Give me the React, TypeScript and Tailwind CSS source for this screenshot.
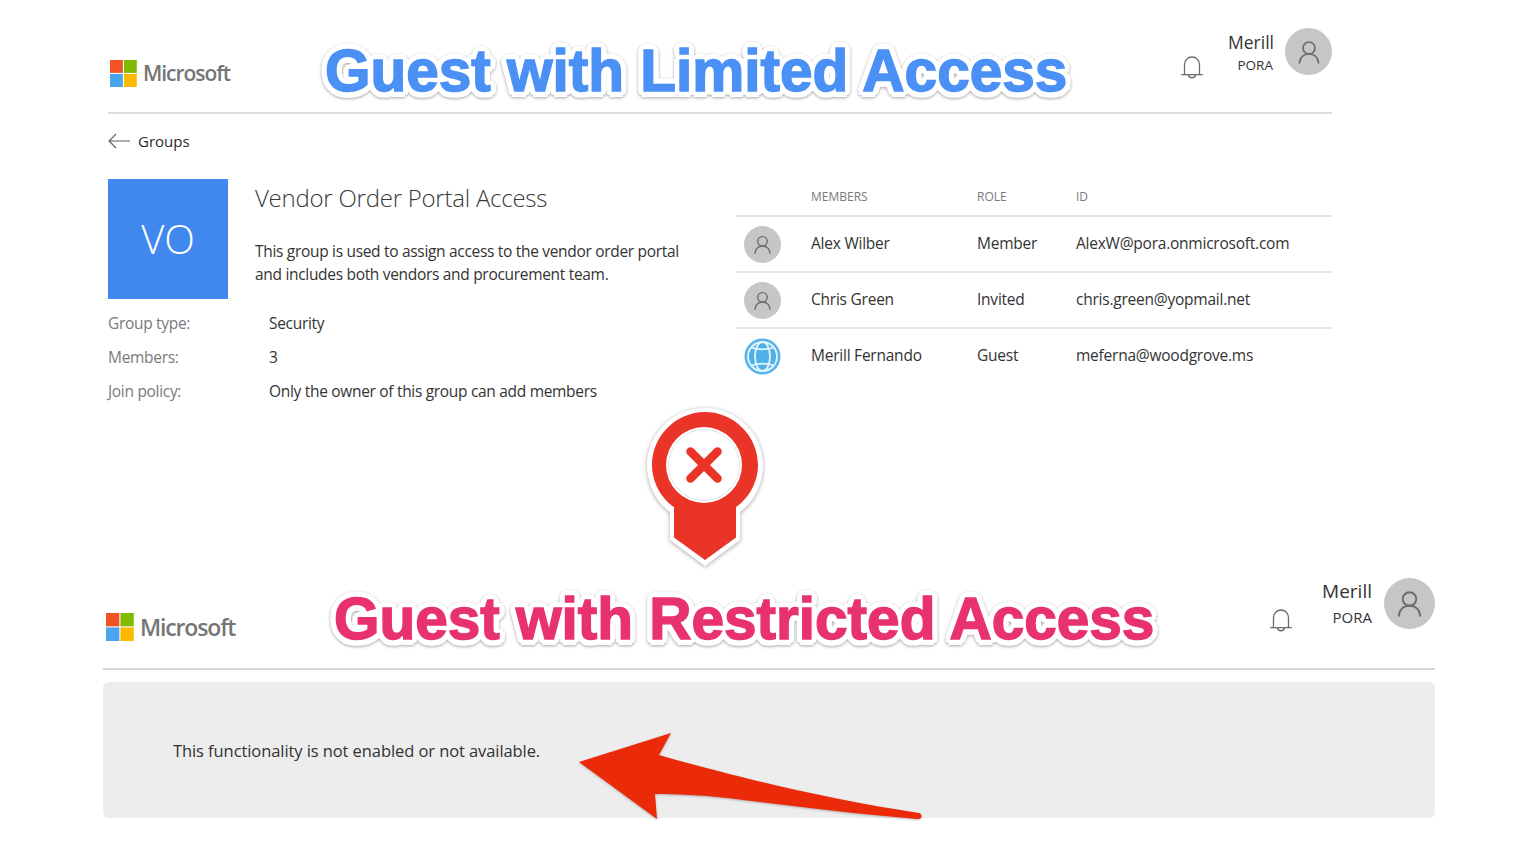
import React, { FC } from "react";

const sans = "font-['Open_Sans','Noto_Sans',sans-serif]";
// white halo is a ring of text shadows, colour stroke thickens the letters
const titleClass =
  "absolute z-10 whitespace-nowrap font-['Liberation_Sans',Arial,sans-serif] font-bold text-[58.5px] leading-none [text-shadow:6px_0_0_white,-6px_0_0_white,0_6px_0_white,0_-6px_0_white,4px_4px_0_white,-4px_4px_0_white,4px_-4px_0_white,-4px_-4px_0_white,5.500px_2.500px_0_white,-5.500px_2.500px_0_white,5.500px_-2.500px_0_white,-5.500px_-2.500px_0_white,2.500px_5.500px_0_white,-2.500px_5.500px_0_white,2.500px_-5.500px_0_white,-2.500px_-5.500px_0_white] drop-shadow-[0_1.5px_1.500px_rgba(0,0,0,0.35)]";

const MsLogo: FC<{ size: number; text: string; gap: string }> = ({ size, text, gap }) => (
  <div className={`flex items-center ${gap}`}>
    <svg width={size} height={size} viewBox="0 0 26 26">
      <rect x="0" y="0" width="12.4" height="12.4" fill="#f25325" />
      <rect x="13.4" y="0" width="12.4" height="12.4" fill="#80bb02" />
      <rect x="0" y="13.4" width="12.4" height="12.6" fill="#4aa5f0" />
      <rect x="13.4" y="13.4" width="12.4" height="12.6" fill="#fdb900" />
    </svg>
    <span className={`${sans} ${text} font-semibold text-[#757575] tracking-[-0.05em] leading-none`}>Microsoft</span>
  </div>
);

const Bell: FC = () => (
  <svg width="22" height="25" viewBox="0 0 22 25" fill="none" stroke="#6b6b6b" strokeWidth="1.3" strokeLinejoin="round" strokeLinecap="round">
    <path d="M3.500 18.500V8.500a7.500 7.500 0 0 1 15 0v10" />
    <path d="M.7 18.700h20.600" />
    <path d="M7.500 19a3.600 3.600 0 0 0 7 0" />
  </svg>
);

const Avatar: FC<{ cls: string; icon: number }> = ({ cls, icon }) => (
  <div className={`flex items-center justify-center rounded-full bg-[#c6c6c6] ${cls}`}>
    <svg width={icon} height={icon} viewBox="0 0 24 24" fill="none" stroke="#6a6a6a" strokeWidth="1.7" strokeLinecap="round">
      <circle cx="12" cy="8" r="6" />
      <path d="M2.500 23c.6-5.500 4-9 9.500-9s8.900 3.500 9.500 9" />
    </svg>
  </div>
);

const Globe: FC = () => (
  <svg width="37" height="37" viewBox="0 0 37 37" fill="none">
    <circle cx="18.500" cy="18.500" r="18" fill="#55b5eb" />
    <circle cx="18.500" cy="18.500" r="14.500" fill="#4fb0e8" stroke="#e4f4fc" strokeWidth="1.800" />
    <ellipse cx="18.500" cy="18.500" rx="7.500" ry="14.500" stroke="#e4f4fc" strokeWidth="1.800" />
    <path d="M7 9.500c6.500 2.500 16.500 2.500 23 0M7 27.500c6.500-2.500 16.500-2.500 23 0" stroke="#e4f4fc" strokeWidth="1.800" />
  </svg>
);

const members = [
  { name: "Alex Wilber", role: "Member", id: "AlexW@pora.onmicrosoft.com", globe: false },
  { name: "Chris Green", role: "Invited", id: "chris.green@yopmail.net", globe: false },
  { name: "Merill Fernando", role: "Guest", id: "meferna@woodgrove.ms", globe: true },
];

const meta = [
  ["Group type:", "Security"],
  ["Members:", "3"],
  ["Join policy:", "Only the owner of this group can add members"],
];

const App: FC = () => {
  return (
    <div className={`relative h-[845px] w-[1530px] overflow-hidden bg-white text-[#2f2f2f] ${sans}`}>
      <h1 className={`${titleClass} left-[325px] top-[42px] text-[#4a90f5] [-webkit-text-stroke:1.5px_#4a90f5]`}>Guest with Limited Access</h1>
      <h1 className={`${titleClass} left-[334px] top-[590px] text-[#e8326f] [-webkit-text-stroke:1.5px_#e8326f]`}>Guest with Restricted Access</h1>

      {/* pin */}
      <svg className="absolute left-[640px] top-[404px] z-10 drop-shadow-[0_1px_2px_rgba(0,0,0,0.35)]" width="130" height="170" viewBox="0 0 130 170">
        <path d="M65 4C33 4 7 30 7 61c0 21 11 39 23 47v28l35 26 35-26v-28c12-8 23-26 23-47C123 30 97 4 65 4Z" fill="white" />
        <path d="M65 8c-29 0-53 24-53 53 0 18 10 34 22 42v30.500l31 22.500 31-22.500V103c12-8 22-24 22-42 0-29-24-53-53-53Z" fill="#e93427" />
        <circle cx="64" cy="61" r="38" fill="white" />
        <circle cx="64" cy="61" r="35.500" fill="white" stroke="#e4e4e4" strokeWidth="1" />
        <path d="M50.500 47.500l27 27M77.500 47.500l-27 27" stroke="#e93427" strokeWidth="8.500" strokeLinecap="round" />
      </svg>

      {/* big arrow */}
      <svg className="absolute left-[575px] top-[728px] z-10 drop-shadow-[0_1px_1px_rgba(0,0,0,0.25)]" width="355" height="96" viewBox="0 0 355 96">
        <path d="M4 34 96 5 84 27c70 20 170 45 260 58 4 1 3 7-2 6C270 85 210 77 152 70 125 67 100 66 80 66l2 25Z" fill="#ea2a08" />
      </svg>

      {/* limited access view */}
      <section className="ml-[108px] w-[1224px]">
        <header className="flex h-[114px] items-start justify-between border-b-2 border-[#dcdcdc]">
          <div className="pl-[2px] pt-[60px]">
            <MsLogo size={27} text="text-[21px]" gap="gap-[6px]" />
          </div>
          <div className="flex items-start">
            <div className="pt-[56px]">
              <Bell />
            </div>
            <div className="ml-[25px] flex flex-col items-end pt-[30px]">
              <span className="text-[17.500px] leading-[24px] text-[#333]">Merill</span>
              <span className="mr-[1px] mt-[1px] text-[13.500px] leading-[20px] text-[#333]">PORA</span>
            </div>
            <Avatar cls="ml-[11px] mt-[28px] h-[47px] w-[47px]" icon={24} />
          </div>
        </header>

        <div className="mt-[14px] flex h-[26px] items-center gap-[8px]">
          <svg width="22" height="16" viewBox="0 0 22 16" fill="none" stroke="#5f5f5f" strokeWidth="1.1">
            <path d="M22 8H1M8 1 1 8l7 7" />
          </svg>
          <span className="text-[15px] text-[#2a2a2a]">Groups</span>
        </div>

        <div className="mt-[25px] flex">
          <div className="w-[628px]">
            <div className="flex">
              <div className="flex h-[120px] w-[120px] items-center justify-center bg-[#4188ee] text-[40px] font-light text-white">VO</div>
              <div className="pl-[27px]">
                <h2 className="text-[24px] font-light leading-[38px] tracking-[-0.01em] text-[#3a3a3a]">Vendor Order Portal Access</h2>
                <p className="mt-[23px] text-[15.500px] leading-[23px] tracking-[-0.02em] text-[#333]">
                  This group is used to assign access to the vendor order portal
                  <br />
                  and includes both vendors and procurement team.
                </p>
              </div>
            </div>
            <div className="mt-[8px]">
              {meta.map(([label, value]) => (
                <div key={label} className="flex h-[34px] items-center text-[15.500px] tracking-[-0.02em]">
                  <span className="w-[161px] text-[#7a7a7a]">{label}</span>
                  <span className="text-[#333]">{value}</span>
                </div>
              ))}
            </div>
          </div>

          <div className="w-[596px]">
            <div className="grid h-[38px] grid-cols-[75px_166px_99px_1fr] items-center border-b-2 border-[#e2e2e2] text-[12px] text-[#7a7a7a]">
              <span />
              <span>MEMBERS</span>
              <span>ROLE</span>
              <span>ID</span>
            </div>
            {members.map((m, i) => (
              <div key={m.name} className={`grid grid-cols-[75px_166px_99px_1fr] items-center text-[15.500px] tracking-[-0.015em] text-[#333] ${i < 2 ? "h-[56px] border-b-2 border-[#e6e6e6]" : "h-[54px]"}`}>
                <div className="pl-[8px]">{m.globe ? <Globe /> : <Avatar cls="h-[37px] w-[37px]" icon={19} />}</div>
                <span>{m.name}</span>
                <span>{m.role}</span>
                <span>{m.id}</span>
              </div>
            ))}
          </div>
        </div>
      </section>

      {/* restricted access view */}
      <section className="absolute bottom-[27px] left-[103px] w-[1332px]">
        <header className="flex h-[100px] items-start justify-between border-b-2 border-[#d8d8d8]">
          <div className="pl-[3px] pt-[43px]">
            <MsLogo size={28} text="text-[23px]" gap="gap-[6px]" />
          </div>
          <div className="flex items-start">
            <div className="pt-[39px]">
              <Bell />
            </div>
            <div className="ml-[30px] flex flex-col items-end pt-[8px]">
              <span className="text-[19px] leading-[27px] text-[#333]">Merill</span>
              <span className="mt-[2px] text-[15px] leading-[20px] text-[#333]">PORA</span>
            </div>
            <Avatar cls="ml-[12px] mt-[8px] h-[51px] w-[51px]" icon={27} />
          </div>
        </header>
        <div className="mt-[12px] flex h-[136px] items-center rounded-[6px] bg-[#ededed] pl-[70px] pt-[2px] text-[16.500px] tracking-[-0.005em] text-[#333]">
          This functionality is not enabled or not available.
        </div>
      </section>
    </div>
  );
};

export default App;
